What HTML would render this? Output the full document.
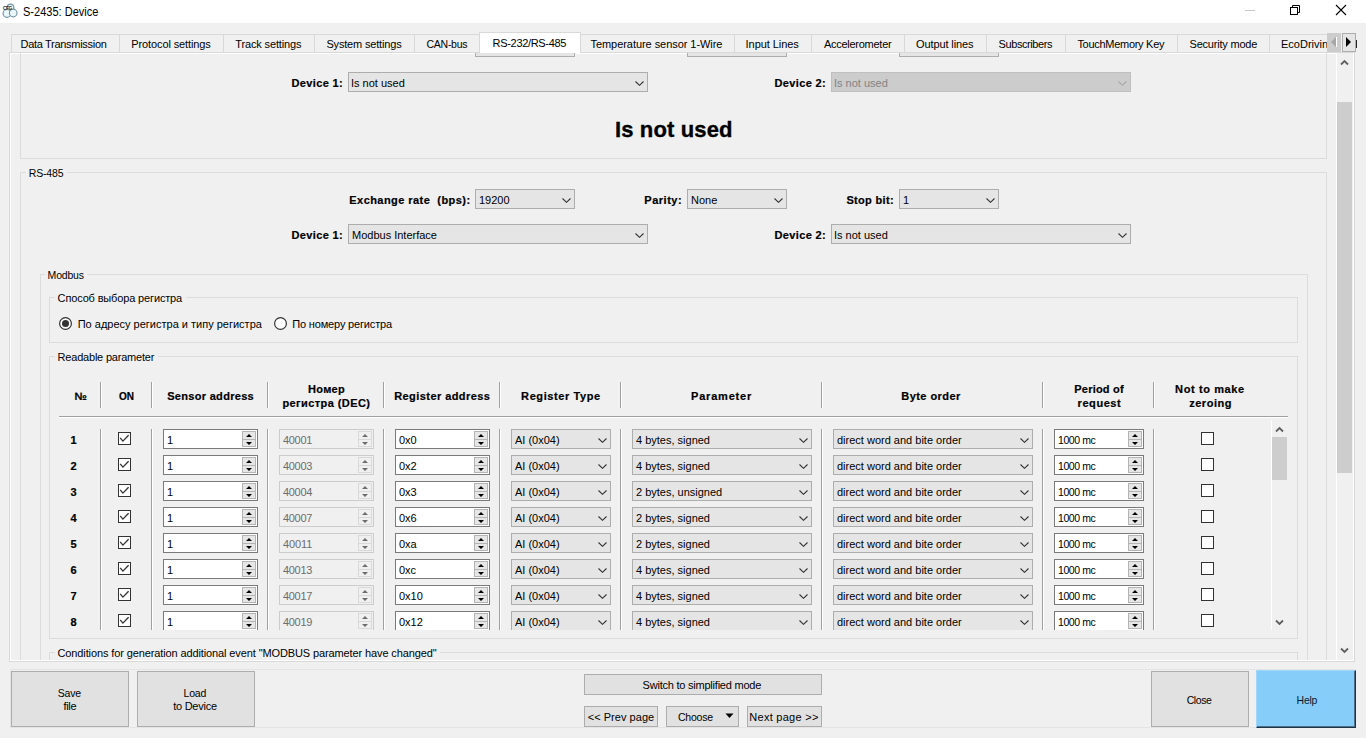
<!DOCTYPE html>
<html><head><meta charset="utf-8"><title>S-2435: Device</title>
<style>
html,body{margin:0;padding:0;}
body{width:1366px;height:738px;overflow:hidden;background:#f0f0f0;font-family:"Liberation Sans", sans-serif;position:relative;}
div,svg{position:absolute;}
</style></head><body>
<div style="left:0;top:0;width:1366px;height:23px;background:#fff;"></div>
<svg style="left:0;top:0" width="22" height="22" viewBox="0 0 22 22">
<circle cx="10.5" cy="7.5" r="3.3" fill="#eaf8fc" stroke="#7896a3" stroke-width="1.2"/>
<circle cx="7" cy="13.4" r="3.9" fill="#eaf8fc" stroke="#7896a3" stroke-width="1.2"/>
<circle cx="13.2" cy="13" r="3.8" fill="#eaf8fc" stroke="#7896a3" stroke-width="1.2"/>
<text x="2.9" y="9.8" font-size="4.6" font-family="Liberation Sans" fill="#222" font-weight="bold" letter-spacing="-0.3">CFG</text>
</svg>
<div style="left:23.30px;top:2px;font-size:12px;line-height:20px;color:#000;white-space:pre;transform:scaleX(0.9190);transform-origin:0 0;">S-2435: Device</div>
<div style="left:1245px;top:10px;width:10px;height:1px;background:#c8c8c8;"></div>
<svg style="left:1288px;top:3px" width="14" height="14" viewBox="0 0 14 14"><rect x="2.5" y="4.5" width="7" height="7" fill="none" stroke="#000" stroke-width="1"/><path d="M4.5 4.5 V2.5 H11.5 V9.5 H9.5" fill="none" stroke="#000" stroke-width="1"/></svg>
<svg style="left:1334px;top:3px" width="14" height="14" viewBox="0 0 14 14"><path d="M2 2 L12 12 M12 2 L2 12" stroke="#000" stroke-width="1.1"/></svg>
<div style="left:9px;top:52px;width:1346px;height:610px;box-sizing:border-box;border:1px solid #d9d9d9;"></div>
<div style="left:10px;top:53px;width:1344px;height:608px;box-sizing:border-box;border:1px solid #ffffff;"></div>
<div style="left:11px;top:53px;width:1326px;height:607px;overflow:hidden;">
<div style="left:-11px;top:-53px;width:1366px;height:738px;">
<div style="left:20px;top:0px;width:1307px;height:159px;box-sizing:border-box;border:1px solid #dcdcdc;"></div>
<div style="left:475px;top:31px;width:100px;height:26px;box-sizing:border-box;border:1px solid #adadad;background:#e5e5e5;"></div>
<div style="left:687px;top:31px;width:100px;height:26px;box-sizing:border-box;border:1px solid #adadad;background:#e5e5e5;"></div>
<div style="left:899px;top:31px;width:100px;height:26px;box-sizing:border-box;border:1px solid #adadad;background:#e5e5e5;"></div>
<div style="left:291.50px;top:73px;font-size:11px;line-height:20px;color:#000;white-space:pre;font-weight:bold;-webkit-text-stroke:0.2px #000;letter-spacing:0.357px;">Device 1:</div>
<div style="left:348px;top:72px;width:300px;height:20px;background:#e5e5e5;box-sizing:border-box;border:1px solid #adadad;"></div>
<div style="left:351.00px;top:73px;font-size:11px;line-height:20px;color:#000;white-space:pre;">Is not used</div>
<svg style="left:635px;top:81px" width="9" height="5" viewBox="0 0 9 5"><path d="M0.5 0.5 L4.5 4.3 L8.5 0.5" fill="none" stroke="#333" stroke-width="1.1"/></svg>
<div style="left:774.50px;top:73px;font-size:11px;line-height:20px;color:#000;white-space:pre;font-weight:bold;-webkit-text-stroke:0.2px #000;letter-spacing:0.357px;">Device 2:</div>
<div style="left:831px;top:72px;width:300px;height:20px;background:#cccccc;box-sizing:border-box;border:1px solid #bfbfbf;"></div>
<div style="left:834.00px;top:73px;font-size:11px;line-height:20px;color:#838383;white-space:pre;">Is not used</div>
<svg style="left:1118px;top:81px" width="9" height="5" viewBox="0 0 9 5"><path d="M0.5 0.5 L4.5 4.3 L8.5 0.5" fill="none" stroke="#a8a8a8" stroke-width="1.1"/></svg>
<div style="left:615.00px;top:120px;font-size:22px;line-height:20px;color:#000;white-space:pre;font-weight:bold;letter-spacing:0.132px;-webkit-text-stroke:0.35px #000;">Is not used</div>
<div style="left:20px;top:172px;width:1307px;height:600px;box-sizing:border-box;border:1px solid #dcdcdc;"></div>
<div style="left:26px;top:166px;width:41px;height:12px;background:#f0f0f0;"></div>
<div style="left:28.80px;top:163px;font-size:10.5px;line-height:20px;color:#000;white-space:pre;letter-spacing:-0.178px;">RS-485</div>
<div style="left:349.30px;top:190px;font-size:11px;line-height:20px;color:#000;white-space:pre;font-weight:bold;-webkit-text-stroke:0.2px #000;letter-spacing:0.445px;">Exchange rate  (bps):</div>
<div style="left:475px;top:189px;width:100px;height:20px;background:#e5e5e5;box-sizing:border-box;border:1px solid #adadad;"></div>
<div style="left:479.00px;top:190px;font-size:11px;line-height:20px;color:#000;white-space:pre;">19200</div>
<svg style="left:562px;top:198px" width="9" height="5" viewBox="0 0 9 5"><path d="M0.5 0.5 L4.5 4.3 L8.5 0.5" fill="none" stroke="#333" stroke-width="1.1"/></svg>
<div style="left:644.30px;top:190px;font-size:11px;line-height:20px;color:#000;white-space:pre;font-weight:bold;-webkit-text-stroke:0.2px #000;letter-spacing:0.521px;">Parity:</div>
<div style="left:687px;top:189px;width:100px;height:20px;background:#e5e5e5;box-sizing:border-box;border:1px solid #adadad;"></div>
<div style="left:691.00px;top:190px;font-size:11px;line-height:20px;color:#000;white-space:pre;">None</div>
<svg style="left:774px;top:198px" width="9" height="5" viewBox="0 0 9 5"><path d="M0.5 0.5 L4.5 4.3 L8.5 0.5" fill="none" stroke="#333" stroke-width="1.1"/></svg>
<div style="left:846.40px;top:190px;font-size:11px;line-height:20px;color:#000;white-space:pre;font-weight:bold;-webkit-text-stroke:0.2px #000;letter-spacing:0.333px;">Stop bit:</div>
<div style="left:899px;top:189px;width:100px;height:20px;background:#e5e5e5;box-sizing:border-box;border:1px solid #adadad;"></div>
<div style="left:903.00px;top:190px;font-size:11px;line-height:20px;color:#000;white-space:pre;">1</div>
<svg style="left:986px;top:198px" width="9" height="5" viewBox="0 0 9 5"><path d="M0.5 0.5 L4.5 4.3 L8.5 0.5" fill="none" stroke="#333" stroke-width="1.1"/></svg>
<div style="left:291.50px;top:225px;font-size:11px;line-height:20px;color:#000;white-space:pre;font-weight:bold;-webkit-text-stroke:0.2px #000;letter-spacing:0.357px;">Device 1:</div>
<div style="left:348px;top:224px;width:300px;height:20px;background:#e5e5e5;box-sizing:border-box;border:1px solid #adadad;"></div>
<div style="left:352.00px;top:225px;font-size:11px;line-height:20px;color:#000;white-space:pre;">Modbus Interface</div>
<svg style="left:635px;top:233px" width="9" height="5" viewBox="0 0 9 5"><path d="M0.5 0.5 L4.5 4.3 L8.5 0.5" fill="none" stroke="#333" stroke-width="1.1"/></svg>
<div style="left:774.50px;top:225px;font-size:11px;line-height:20px;color:#000;white-space:pre;font-weight:bold;-webkit-text-stroke:0.2px #000;letter-spacing:0.357px;">Device 2:</div>
<div style="left:831px;top:224px;width:300px;height:20px;background:#e5e5e5;box-sizing:border-box;border:1px solid #adadad;"></div>
<div style="left:834.00px;top:225px;font-size:11px;line-height:20px;color:#000;white-space:pre;">Is not used</div>
<svg style="left:1118px;top:233px" width="9" height="5" viewBox="0 0 9 5"><path d="M0.5 0.5 L4.5 4.3 L8.5 0.5" fill="none" stroke="#333" stroke-width="1.1"/></svg>
<div style="left:40px;top:274px;width:1268px;height:600px;box-sizing:border-box;border:1px solid #dcdcdc;"></div>
<div style="left:45px;top:268px;width:42px;height:12px;background:#f0f0f0;"></div>
<div style="left:47.60px;top:265px;font-size:10.5px;line-height:20px;color:#000;white-space:pre;letter-spacing:-0.206px;">Modbus</div>
<div style="left:49px;top:297px;width:1249px;height:46px;box-sizing:border-box;border:1px solid #dcdcdc;"></div>
<div style="left:55px;top:291px;width:131px;height:12px;background:#f0f0f0;"></div>
<div style="left:57.60px;top:288px;font-size:11px;line-height:20px;color:#000;white-space:pre;letter-spacing:-0.149px;">Способ выбора регистра</div>
<svg style="left:59px;top:317px" width="13" height="13" viewBox="0 0 13 13"><circle cx="6.5" cy="6.5" r="5.9" fill="#fff" stroke="#333" stroke-width="1.2"/><circle cx="6.5" cy="6.5" r="3.5" fill="#333"/></svg>
<div style="left:77.70px;top:314px;font-size:11px;line-height:20px;color:#000;white-space:pre;">По адресу регистра и типу регистра</div>
<svg style="left:274px;top:317px" width="13" height="13" viewBox="0 0 13 13"><circle cx="6.5" cy="6.5" r="5.9" fill="#fff" stroke="#333" stroke-width="1.2"/></svg>
<div style="left:292.30px;top:314px;font-size:11px;line-height:20px;color:#000;white-space:pre;letter-spacing:-0.168px;">По номеру регистра</div>
<div style="left:49px;top:356px;width:1249px;height:283px;box-sizing:border-box;border:1px solid #dcdcdc;"></div>
<div style="left:55px;top:350px;width:103px;height:12px;background:#f0f0f0;"></div>
<div style="left:57.60px;top:347px;font-size:11px;line-height:20px;color:#000;white-space:pre;letter-spacing:-0.207px;">Readable parameter</div>
<div style="left:100px;top:382px;width:1px;height:26px;background:#a0a0a0;"></div>
<div style="left:101px;top:382px;width:1px;height:26px;background:#ffffff;"></div>
<div style="left:151px;top:382px;width:1px;height:26px;background:#a0a0a0;"></div>
<div style="left:152px;top:382px;width:1px;height:26px;background:#ffffff;"></div>
<div style="left:267px;top:382px;width:1px;height:26px;background:#a0a0a0;"></div>
<div style="left:268px;top:382px;width:1px;height:26px;background:#ffffff;"></div>
<div style="left:383px;top:382px;width:1px;height:26px;background:#a0a0a0;"></div>
<div style="left:384px;top:382px;width:1px;height:26px;background:#ffffff;"></div>
<div style="left:499px;top:382px;width:1px;height:26px;background:#a0a0a0;"></div>
<div style="left:500px;top:382px;width:1px;height:26px;background:#ffffff;"></div>
<div style="left:620px;top:382px;width:1px;height:26px;background:#a0a0a0;"></div>
<div style="left:621px;top:382px;width:1px;height:26px;background:#ffffff;"></div>
<div style="left:821px;top:382px;width:1px;height:26px;background:#a0a0a0;"></div>
<div style="left:822px;top:382px;width:1px;height:26px;background:#ffffff;"></div>
<div style="left:1042px;top:382px;width:1px;height:26px;background:#a0a0a0;"></div>
<div style="left:1043px;top:382px;width:1px;height:26px;background:#ffffff;"></div>
<div style="left:1153px;top:382px;width:1px;height:26px;background:#a0a0a0;"></div>
<div style="left:1154px;top:382px;width:1px;height:26px;background:#ffffff;"></div>
<div style="left:59px;top:416px;width:1229px;height:1px;background:#a0a0a0;"></div>
<div style="left:59px;top:417px;width:1229px;height:1px;background:#ffffff;"></div>
<div style="left:74.40px;top:386px;font-size:11px;line-height:20px;color:#000;white-space:pre;font-weight:bold;-webkit-text-stroke:0.2px #000;">№</div>
<div style="left:119.00px;top:387px;font-size:10.0px;line-height:20px;color:#000;white-space:pre;font-weight:bold;-webkit-text-stroke:0.2px #000;letter-spacing:-0.051px;">ON</div>
<div style="left:167.20px;top:386px;font-size:11px;line-height:20px;color:#000;white-space:pre;font-weight:bold;-webkit-text-stroke:0.2px #000;letter-spacing:0.306px;">Sensor address</div>
<div style="left:308.00px;top:379px;font-size:11px;line-height:20px;color:#000;white-space:pre;font-weight:bold;-webkit-text-stroke:0.2px #000;letter-spacing:0.307px;">Номер</div>
<div style="left:282.40px;top:393px;font-size:11px;line-height:20px;color:#000;white-space:pre;font-weight:bold;-webkit-text-stroke:0.2px #000;letter-spacing:0.418px;">регистра (DEC)</div>
<div style="left:394.20px;top:386px;font-size:11px;line-height:20px;color:#000;white-space:pre;font-weight:bold;-webkit-text-stroke:0.2px #000;letter-spacing:0.430px;">Register address</div>
<div style="left:521.10px;top:386px;font-size:11px;line-height:20px;color:#000;white-space:pre;font-weight:bold;-webkit-text-stroke:0.2px #000;letter-spacing:0.591px;">Register Type</div>
<div style="left:691.00px;top:386px;font-size:11px;line-height:20px;color:#000;white-space:pre;font-weight:bold;-webkit-text-stroke:0.2px #000;letter-spacing:0.808px;">Parameter</div>
<div style="left:901.30px;top:386px;font-size:11px;line-height:20px;color:#000;white-space:pre;font-weight:bold;-webkit-text-stroke:0.2px #000;letter-spacing:0.441px;">Byte order</div>
<div style="left:1074.30px;top:379px;font-size:11px;line-height:20px;color:#000;white-space:pre;font-weight:bold;-webkit-text-stroke:0.2px #000;letter-spacing:0.212px;">Period of</div>
<div style="left:1077.60px;top:393px;font-size:11px;line-height:20px;color:#000;white-space:pre;font-weight:bold;-webkit-text-stroke:0.2px #000;letter-spacing:0.555px;">request</div>
<div style="left:1175.10px;top:379px;font-size:11px;line-height:20px;color:#000;white-space:pre;font-weight:bold;-webkit-text-stroke:0.2px #000;letter-spacing:0.606px;">Not to make</div>
<div style="left:1189.20px;top:393px;font-size:11px;line-height:20px;color:#000;white-space:pre;font-weight:bold;-webkit-text-stroke:0.2px #000;letter-spacing:0.518px;">zeroing</div>
<div style="left:59px;top:420px;width:1229px;height:210px;overflow:hidden;">
<div style="left:-59px;top:-420px;width:1366px;height:738px;">
<div style="left:100px;top:429px;width:1px;height:300px;background:#a0a0a0;"></div>
<div style="left:101px;top:429px;width:1px;height:300px;background:#ffffff;"></div>
<div style="left:151px;top:429px;width:1px;height:300px;background:#a0a0a0;"></div>
<div style="left:152px;top:429px;width:1px;height:300px;background:#ffffff;"></div>
<div style="left:267px;top:429px;width:1px;height:300px;background:#a0a0a0;"></div>
<div style="left:268px;top:429px;width:1px;height:300px;background:#ffffff;"></div>
<div style="left:383px;top:429px;width:1px;height:300px;background:#a0a0a0;"></div>
<div style="left:384px;top:429px;width:1px;height:300px;background:#ffffff;"></div>
<div style="left:499px;top:429px;width:1px;height:300px;background:#a0a0a0;"></div>
<div style="left:500px;top:429px;width:1px;height:300px;background:#ffffff;"></div>
<div style="left:620px;top:429px;width:1px;height:300px;background:#a0a0a0;"></div>
<div style="left:621px;top:429px;width:1px;height:300px;background:#ffffff;"></div>
<div style="left:821px;top:429px;width:1px;height:300px;background:#a0a0a0;"></div>
<div style="left:822px;top:429px;width:1px;height:300px;background:#ffffff;"></div>
<div style="left:1042px;top:429px;width:1px;height:300px;background:#a0a0a0;"></div>
<div style="left:1043px;top:429px;width:1px;height:300px;background:#ffffff;"></div>
<div style="left:1153px;top:429px;width:1px;height:300px;background:#a0a0a0;"></div>
<div style="left:1154px;top:429px;width:1px;height:300px;background:#ffffff;"></div>
<div style="left:70.50px;top:430px;font-size:11px;line-height:20px;color:#000;white-space:pre;font-weight:bold;-webkit-text-stroke:0.2px #000;">1</div>
<div style="left:118px;top:432px;width:13px;height:13px;background:#fff;box-sizing:border-box;border:1px solid #333;"></div>
<svg style="left:118px;top:432px" width="13" height="13" viewBox="0 0 13 13"><path d="M2.2 5.9 L4.9 9.1 L10.6 3.2" fill="none" stroke="#333" stroke-width="1.35"/></svg>
<div style="left:163px;top:429px;width:95px;height:20px;background:#fff;box-sizing:border-box;border:1px solid #7a7a7a;"></div>
<div style="left:242px;top:431px;width:14px;height:16px;background:#e6e6e6;box-sizing:border-box;border:1px solid #b4b4b4;"></div>
<div style="left:243px;top:439px;width:12px;height:1px;background:#b4b4b4;"></div>
<svg style="left:246px;top:434px" width="6" height="12" viewBox="0 0 6 12"><path d="M0 3 L3 0 L6 3Z M0 8 L3 11 L6 8Z" fill="#000"/></svg>
<div style="left:167.00px;top:430px;font-size:11px;line-height:20px;color:#000;white-space:pre;">1</div>
<div style="left:279px;top:429px;width:95px;height:20px;background:#f0f0f0;box-sizing:border-box;border:1px solid #cccccc;"></div>
<div style="left:358px;top:431px;width:14px;height:16px;background:#f0f0f0;box-sizing:border-box;border:1px solid #d9d9d9;"></div>
<div style="left:359px;top:439px;width:12px;height:1px;background:#d9d9d9;"></div>
<svg style="left:362px;top:434px" width="6" height="12" viewBox="0 0 6 12"><path d="M0 3 L3 0 L6 3Z M0 8 L3 11 L6 8Z" fill="#6d6d6d"/></svg>
<div style="left:283.00px;top:430px;font-size:11px;line-height:20px;color:#6d6d6d;white-space:pre;letter-spacing:-0.318px;">40001</div>
<div style="left:395px;top:429px;width:95px;height:20px;background:#fff;box-sizing:border-box;border:1px solid #7a7a7a;"></div>
<div style="left:474px;top:431px;width:14px;height:16px;background:#e6e6e6;box-sizing:border-box;border:1px solid #b4b4b4;"></div>
<div style="left:475px;top:439px;width:12px;height:1px;background:#b4b4b4;"></div>
<svg style="left:478px;top:434px" width="6" height="12" viewBox="0 0 6 12"><path d="M0 3 L3 0 L6 3Z M0 8 L3 11 L6 8Z" fill="#000"/></svg>
<div style="left:399.00px;top:430px;font-size:11px;line-height:20px;color:#000;white-space:pre;">0x0</div>
<div style="left:511px;top:429px;width:100px;height:20px;background:#e5e5e5;box-sizing:border-box;border:1px solid #adadad;"></div>
<div style="left:515.00px;top:430px;font-size:11px;line-height:20px;color:#000;white-space:pre;">AI (0x04)</div>
<svg style="left:598px;top:438px" width="9" height="5" viewBox="0 0 9 5"><path d="M0.5 0.5 L4.5 4.3 L8.5 0.5" fill="none" stroke="#333" stroke-width="1.1"/></svg>
<div style="left:632px;top:429px;width:180px;height:20px;background:#e5e5e5;box-sizing:border-box;border:1px solid #adadad;"></div>
<div style="left:636.00px;top:430px;font-size:11px;line-height:20px;color:#000;white-space:pre;">4 bytes, signed</div>
<svg style="left:799px;top:438px" width="9" height="5" viewBox="0 0 9 5"><path d="M0.5 0.5 L4.5 4.3 L8.5 0.5" fill="none" stroke="#333" stroke-width="1.1"/></svg>
<div style="left:833px;top:429px;width:200px;height:20px;background:#e5e5e5;box-sizing:border-box;border:1px solid #adadad;"></div>
<div style="left:837.00px;top:430px;font-size:11px;line-height:20px;color:#000;white-space:pre;">direct word and bite order</div>
<svg style="left:1020px;top:438px" width="9" height="5" viewBox="0 0 9 5"><path d="M0.5 0.5 L4.5 4.3 L8.5 0.5" fill="none" stroke="#333" stroke-width="1.1"/></svg>
<div style="left:1054px;top:429px;width:90px;height:20px;background:#fff;box-sizing:border-box;border:1px solid #7a7a7a;"></div>
<div style="left:1128px;top:431px;width:14px;height:16px;background:#e6e6e6;box-sizing:border-box;border:1px solid #b4b4b4;"></div>
<div style="left:1129px;top:439px;width:12px;height:1px;background:#b4b4b4;"></div>
<svg style="left:1132px;top:434px" width="6" height="12" viewBox="0 0 6 12"><path d="M0 3 L3 0 L6 3Z M0 8 L3 11 L6 8Z" fill="#000"/></svg>
<div style="left:1058.00px;top:430px;font-size:10.5px;line-height:20px;color:#000;white-space:pre;letter-spacing:-0.408px;">1000 mc</div>
<div style="left:1201px;top:432px;width:13px;height:13px;background:#fff;box-sizing:border-box;border:1px solid #333;"></div>
<div style="left:70.50px;top:456px;font-size:11px;line-height:20px;color:#000;white-space:pre;font-weight:bold;-webkit-text-stroke:0.2px #000;">2</div>
<div style="left:118px;top:458px;width:13px;height:13px;background:#fff;box-sizing:border-box;border:1px solid #333;"></div>
<svg style="left:118px;top:458px" width="13" height="13" viewBox="0 0 13 13"><path d="M2.2 5.9 L4.9 9.1 L10.6 3.2" fill="none" stroke="#333" stroke-width="1.35"/></svg>
<div style="left:163px;top:455px;width:95px;height:20px;background:#fff;box-sizing:border-box;border:1px solid #7a7a7a;"></div>
<div style="left:242px;top:457px;width:14px;height:16px;background:#e6e6e6;box-sizing:border-box;border:1px solid #b4b4b4;"></div>
<div style="left:243px;top:465px;width:12px;height:1px;background:#b4b4b4;"></div>
<svg style="left:246px;top:460px" width="6" height="12" viewBox="0 0 6 12"><path d="M0 3 L3 0 L6 3Z M0 8 L3 11 L6 8Z" fill="#000"/></svg>
<div style="left:167.00px;top:456px;font-size:11px;line-height:20px;color:#000;white-space:pre;">1</div>
<div style="left:279px;top:455px;width:95px;height:20px;background:#f0f0f0;box-sizing:border-box;border:1px solid #cccccc;"></div>
<div style="left:358px;top:457px;width:14px;height:16px;background:#f0f0f0;box-sizing:border-box;border:1px solid #d9d9d9;"></div>
<div style="left:359px;top:465px;width:12px;height:1px;background:#d9d9d9;"></div>
<svg style="left:362px;top:460px" width="6" height="12" viewBox="0 0 6 12"><path d="M0 3 L3 0 L6 3Z M0 8 L3 11 L6 8Z" fill="#6d6d6d"/></svg>
<div style="left:283.00px;top:456px;font-size:11px;line-height:20px;color:#6d6d6d;white-space:pre;letter-spacing:-0.318px;">40003</div>
<div style="left:395px;top:455px;width:95px;height:20px;background:#fff;box-sizing:border-box;border:1px solid #7a7a7a;"></div>
<div style="left:474px;top:457px;width:14px;height:16px;background:#e6e6e6;box-sizing:border-box;border:1px solid #b4b4b4;"></div>
<div style="left:475px;top:465px;width:12px;height:1px;background:#b4b4b4;"></div>
<svg style="left:478px;top:460px" width="6" height="12" viewBox="0 0 6 12"><path d="M0 3 L3 0 L6 3Z M0 8 L3 11 L6 8Z" fill="#000"/></svg>
<div style="left:399.00px;top:456px;font-size:11px;line-height:20px;color:#000;white-space:pre;">0x2</div>
<div style="left:511px;top:455px;width:100px;height:20px;background:#e5e5e5;box-sizing:border-box;border:1px solid #adadad;"></div>
<div style="left:515.00px;top:456px;font-size:11px;line-height:20px;color:#000;white-space:pre;">AI (0x04)</div>
<svg style="left:598px;top:464px" width="9" height="5" viewBox="0 0 9 5"><path d="M0.5 0.5 L4.5 4.3 L8.5 0.5" fill="none" stroke="#333" stroke-width="1.1"/></svg>
<div style="left:632px;top:455px;width:180px;height:20px;background:#e5e5e5;box-sizing:border-box;border:1px solid #adadad;"></div>
<div style="left:636.00px;top:456px;font-size:11px;line-height:20px;color:#000;white-space:pre;">4 bytes, signed</div>
<svg style="left:799px;top:464px" width="9" height="5" viewBox="0 0 9 5"><path d="M0.5 0.5 L4.5 4.3 L8.5 0.5" fill="none" stroke="#333" stroke-width="1.1"/></svg>
<div style="left:833px;top:455px;width:200px;height:20px;background:#e5e5e5;box-sizing:border-box;border:1px solid #adadad;"></div>
<div style="left:837.00px;top:456px;font-size:11px;line-height:20px;color:#000;white-space:pre;">direct word and bite order</div>
<svg style="left:1020px;top:464px" width="9" height="5" viewBox="0 0 9 5"><path d="M0.5 0.5 L4.5 4.3 L8.5 0.5" fill="none" stroke="#333" stroke-width="1.1"/></svg>
<div style="left:1054px;top:455px;width:90px;height:20px;background:#fff;box-sizing:border-box;border:1px solid #7a7a7a;"></div>
<div style="left:1128px;top:457px;width:14px;height:16px;background:#e6e6e6;box-sizing:border-box;border:1px solid #b4b4b4;"></div>
<div style="left:1129px;top:465px;width:12px;height:1px;background:#b4b4b4;"></div>
<svg style="left:1132px;top:460px" width="6" height="12" viewBox="0 0 6 12"><path d="M0 3 L3 0 L6 3Z M0 8 L3 11 L6 8Z" fill="#000"/></svg>
<div style="left:1058.00px;top:456px;font-size:10.5px;line-height:20px;color:#000;white-space:pre;letter-spacing:-0.408px;">1000 mc</div>
<div style="left:1201px;top:458px;width:13px;height:13px;background:#fff;box-sizing:border-box;border:1px solid #333;"></div>
<div style="left:70.50px;top:482px;font-size:11px;line-height:20px;color:#000;white-space:pre;font-weight:bold;-webkit-text-stroke:0.2px #000;">3</div>
<div style="left:118px;top:484px;width:13px;height:13px;background:#fff;box-sizing:border-box;border:1px solid #333;"></div>
<svg style="left:118px;top:484px" width="13" height="13" viewBox="0 0 13 13"><path d="M2.2 5.9 L4.9 9.1 L10.6 3.2" fill="none" stroke="#333" stroke-width="1.35"/></svg>
<div style="left:163px;top:481px;width:95px;height:20px;background:#fff;box-sizing:border-box;border:1px solid #7a7a7a;"></div>
<div style="left:242px;top:483px;width:14px;height:16px;background:#e6e6e6;box-sizing:border-box;border:1px solid #b4b4b4;"></div>
<div style="left:243px;top:491px;width:12px;height:1px;background:#b4b4b4;"></div>
<svg style="left:246px;top:486px" width="6" height="12" viewBox="0 0 6 12"><path d="M0 3 L3 0 L6 3Z M0 8 L3 11 L6 8Z" fill="#000"/></svg>
<div style="left:167.00px;top:482px;font-size:11px;line-height:20px;color:#000;white-space:pre;">1</div>
<div style="left:279px;top:481px;width:95px;height:20px;background:#f0f0f0;box-sizing:border-box;border:1px solid #cccccc;"></div>
<div style="left:358px;top:483px;width:14px;height:16px;background:#f0f0f0;box-sizing:border-box;border:1px solid #d9d9d9;"></div>
<div style="left:359px;top:491px;width:12px;height:1px;background:#d9d9d9;"></div>
<svg style="left:362px;top:486px" width="6" height="12" viewBox="0 0 6 12"><path d="M0 3 L3 0 L6 3Z M0 8 L3 11 L6 8Z" fill="#6d6d6d"/></svg>
<div style="left:283.00px;top:482px;font-size:11px;line-height:20px;color:#6d6d6d;white-space:pre;letter-spacing:-0.318px;">40004</div>
<div style="left:395px;top:481px;width:95px;height:20px;background:#fff;box-sizing:border-box;border:1px solid #7a7a7a;"></div>
<div style="left:474px;top:483px;width:14px;height:16px;background:#e6e6e6;box-sizing:border-box;border:1px solid #b4b4b4;"></div>
<div style="left:475px;top:491px;width:12px;height:1px;background:#b4b4b4;"></div>
<svg style="left:478px;top:486px" width="6" height="12" viewBox="0 0 6 12"><path d="M0 3 L3 0 L6 3Z M0 8 L3 11 L6 8Z" fill="#000"/></svg>
<div style="left:399.00px;top:482px;font-size:11px;line-height:20px;color:#000;white-space:pre;">0x3</div>
<div style="left:511px;top:481px;width:100px;height:20px;background:#e5e5e5;box-sizing:border-box;border:1px solid #adadad;"></div>
<div style="left:515.00px;top:482px;font-size:11px;line-height:20px;color:#000;white-space:pre;">AI (0x04)</div>
<svg style="left:598px;top:490px" width="9" height="5" viewBox="0 0 9 5"><path d="M0.5 0.5 L4.5 4.3 L8.5 0.5" fill="none" stroke="#333" stroke-width="1.1"/></svg>
<div style="left:632px;top:481px;width:180px;height:20px;background:#e5e5e5;box-sizing:border-box;border:1px solid #adadad;"></div>
<div style="left:636.00px;top:482px;font-size:11px;line-height:20px;color:#000;white-space:pre;">2 bytes, unsigned</div>
<svg style="left:799px;top:490px" width="9" height="5" viewBox="0 0 9 5"><path d="M0.5 0.5 L4.5 4.3 L8.5 0.5" fill="none" stroke="#333" stroke-width="1.1"/></svg>
<div style="left:833px;top:481px;width:200px;height:20px;background:#e5e5e5;box-sizing:border-box;border:1px solid #adadad;"></div>
<div style="left:837.00px;top:482px;font-size:11px;line-height:20px;color:#000;white-space:pre;">direct word and bite order</div>
<svg style="left:1020px;top:490px" width="9" height="5" viewBox="0 0 9 5"><path d="M0.5 0.5 L4.5 4.3 L8.5 0.5" fill="none" stroke="#333" stroke-width="1.1"/></svg>
<div style="left:1054px;top:481px;width:90px;height:20px;background:#fff;box-sizing:border-box;border:1px solid #7a7a7a;"></div>
<div style="left:1128px;top:483px;width:14px;height:16px;background:#e6e6e6;box-sizing:border-box;border:1px solid #b4b4b4;"></div>
<div style="left:1129px;top:491px;width:12px;height:1px;background:#b4b4b4;"></div>
<svg style="left:1132px;top:486px" width="6" height="12" viewBox="0 0 6 12"><path d="M0 3 L3 0 L6 3Z M0 8 L3 11 L6 8Z" fill="#000"/></svg>
<div style="left:1058.00px;top:482px;font-size:10.5px;line-height:20px;color:#000;white-space:pre;letter-spacing:-0.408px;">1000 mc</div>
<div style="left:1201px;top:484px;width:13px;height:13px;background:#fff;box-sizing:border-box;border:1px solid #333;"></div>
<div style="left:70.50px;top:508px;font-size:11px;line-height:20px;color:#000;white-space:pre;font-weight:bold;-webkit-text-stroke:0.2px #000;">4</div>
<div style="left:118px;top:510px;width:13px;height:13px;background:#fff;box-sizing:border-box;border:1px solid #333;"></div>
<svg style="left:118px;top:510px" width="13" height="13" viewBox="0 0 13 13"><path d="M2.2 5.9 L4.9 9.1 L10.6 3.2" fill="none" stroke="#333" stroke-width="1.35"/></svg>
<div style="left:163px;top:507px;width:95px;height:20px;background:#fff;box-sizing:border-box;border:1px solid #7a7a7a;"></div>
<div style="left:242px;top:509px;width:14px;height:16px;background:#e6e6e6;box-sizing:border-box;border:1px solid #b4b4b4;"></div>
<div style="left:243px;top:517px;width:12px;height:1px;background:#b4b4b4;"></div>
<svg style="left:246px;top:512px" width="6" height="12" viewBox="0 0 6 12"><path d="M0 3 L3 0 L6 3Z M0 8 L3 11 L6 8Z" fill="#000"/></svg>
<div style="left:167.00px;top:508px;font-size:11px;line-height:20px;color:#000;white-space:pre;">1</div>
<div style="left:279px;top:507px;width:95px;height:20px;background:#f0f0f0;box-sizing:border-box;border:1px solid #cccccc;"></div>
<div style="left:358px;top:509px;width:14px;height:16px;background:#f0f0f0;box-sizing:border-box;border:1px solid #d9d9d9;"></div>
<div style="left:359px;top:517px;width:12px;height:1px;background:#d9d9d9;"></div>
<svg style="left:362px;top:512px" width="6" height="12" viewBox="0 0 6 12"><path d="M0 3 L3 0 L6 3Z M0 8 L3 11 L6 8Z" fill="#6d6d6d"/></svg>
<div style="left:283.00px;top:508px;font-size:11px;line-height:20px;color:#6d6d6d;white-space:pre;letter-spacing:-0.318px;">40007</div>
<div style="left:395px;top:507px;width:95px;height:20px;background:#fff;box-sizing:border-box;border:1px solid #7a7a7a;"></div>
<div style="left:474px;top:509px;width:14px;height:16px;background:#e6e6e6;box-sizing:border-box;border:1px solid #b4b4b4;"></div>
<div style="left:475px;top:517px;width:12px;height:1px;background:#b4b4b4;"></div>
<svg style="left:478px;top:512px" width="6" height="12" viewBox="0 0 6 12"><path d="M0 3 L3 0 L6 3Z M0 8 L3 11 L6 8Z" fill="#000"/></svg>
<div style="left:399.00px;top:508px;font-size:11px;line-height:20px;color:#000;white-space:pre;">0x6</div>
<div style="left:511px;top:507px;width:100px;height:20px;background:#e5e5e5;box-sizing:border-box;border:1px solid #adadad;"></div>
<div style="left:515.00px;top:508px;font-size:11px;line-height:20px;color:#000;white-space:pre;">AI (0x04)</div>
<svg style="left:598px;top:516px" width="9" height="5" viewBox="0 0 9 5"><path d="M0.5 0.5 L4.5 4.3 L8.5 0.5" fill="none" stroke="#333" stroke-width="1.1"/></svg>
<div style="left:632px;top:507px;width:180px;height:20px;background:#e5e5e5;box-sizing:border-box;border:1px solid #adadad;"></div>
<div style="left:636.00px;top:508px;font-size:11px;line-height:20px;color:#000;white-space:pre;">2 bytes, signed</div>
<svg style="left:799px;top:516px" width="9" height="5" viewBox="0 0 9 5"><path d="M0.5 0.5 L4.5 4.3 L8.5 0.5" fill="none" stroke="#333" stroke-width="1.1"/></svg>
<div style="left:833px;top:507px;width:200px;height:20px;background:#e5e5e5;box-sizing:border-box;border:1px solid #adadad;"></div>
<div style="left:837.00px;top:508px;font-size:11px;line-height:20px;color:#000;white-space:pre;">direct word and bite order</div>
<svg style="left:1020px;top:516px" width="9" height="5" viewBox="0 0 9 5"><path d="M0.5 0.5 L4.5 4.3 L8.5 0.5" fill="none" stroke="#333" stroke-width="1.1"/></svg>
<div style="left:1054px;top:507px;width:90px;height:20px;background:#fff;box-sizing:border-box;border:1px solid #7a7a7a;"></div>
<div style="left:1128px;top:509px;width:14px;height:16px;background:#e6e6e6;box-sizing:border-box;border:1px solid #b4b4b4;"></div>
<div style="left:1129px;top:517px;width:12px;height:1px;background:#b4b4b4;"></div>
<svg style="left:1132px;top:512px" width="6" height="12" viewBox="0 0 6 12"><path d="M0 3 L3 0 L6 3Z M0 8 L3 11 L6 8Z" fill="#000"/></svg>
<div style="left:1058.00px;top:508px;font-size:10.5px;line-height:20px;color:#000;white-space:pre;letter-spacing:-0.408px;">1000 mc</div>
<div style="left:1201px;top:510px;width:13px;height:13px;background:#fff;box-sizing:border-box;border:1px solid #333;"></div>
<div style="left:70.50px;top:534px;font-size:11px;line-height:20px;color:#000;white-space:pre;font-weight:bold;-webkit-text-stroke:0.2px #000;">5</div>
<div style="left:118px;top:536px;width:13px;height:13px;background:#fff;box-sizing:border-box;border:1px solid #333;"></div>
<svg style="left:118px;top:536px" width="13" height="13" viewBox="0 0 13 13"><path d="M2.2 5.9 L4.9 9.1 L10.6 3.2" fill="none" stroke="#333" stroke-width="1.35"/></svg>
<div style="left:163px;top:533px;width:95px;height:20px;background:#fff;box-sizing:border-box;border:1px solid #7a7a7a;"></div>
<div style="left:242px;top:535px;width:14px;height:16px;background:#e6e6e6;box-sizing:border-box;border:1px solid #b4b4b4;"></div>
<div style="left:243px;top:543px;width:12px;height:1px;background:#b4b4b4;"></div>
<svg style="left:246px;top:538px" width="6" height="12" viewBox="0 0 6 12"><path d="M0 3 L3 0 L6 3Z M0 8 L3 11 L6 8Z" fill="#000"/></svg>
<div style="left:167.00px;top:534px;font-size:11px;line-height:20px;color:#000;white-space:pre;">1</div>
<div style="left:279px;top:533px;width:95px;height:20px;background:#f0f0f0;box-sizing:border-box;border:1px solid #cccccc;"></div>
<div style="left:358px;top:535px;width:14px;height:16px;background:#f0f0f0;box-sizing:border-box;border:1px solid #d9d9d9;"></div>
<div style="left:359px;top:543px;width:12px;height:1px;background:#d9d9d9;"></div>
<svg style="left:362px;top:538px" width="6" height="12" viewBox="0 0 6 12"><path d="M0 3 L3 0 L6 3Z M0 8 L3 11 L6 8Z" fill="#6d6d6d"/></svg>
<div style="left:283.00px;top:534px;font-size:11px;line-height:20px;color:#6d6d6d;white-space:pre;letter-spacing:-0.114px;">40011</div>
<div style="left:395px;top:533px;width:95px;height:20px;background:#fff;box-sizing:border-box;border:1px solid #7a7a7a;"></div>
<div style="left:474px;top:535px;width:14px;height:16px;background:#e6e6e6;box-sizing:border-box;border:1px solid #b4b4b4;"></div>
<div style="left:475px;top:543px;width:12px;height:1px;background:#b4b4b4;"></div>
<svg style="left:478px;top:538px" width="6" height="12" viewBox="0 0 6 12"><path d="M0 3 L3 0 L6 3Z M0 8 L3 11 L6 8Z" fill="#000"/></svg>
<div style="left:399.00px;top:534px;font-size:11px;line-height:20px;color:#000;white-space:pre;">0xa</div>
<div style="left:511px;top:533px;width:100px;height:20px;background:#e5e5e5;box-sizing:border-box;border:1px solid #adadad;"></div>
<div style="left:515.00px;top:534px;font-size:11px;line-height:20px;color:#000;white-space:pre;">AI (0x04)</div>
<svg style="left:598px;top:542px" width="9" height="5" viewBox="0 0 9 5"><path d="M0.5 0.5 L4.5 4.3 L8.5 0.5" fill="none" stroke="#333" stroke-width="1.1"/></svg>
<div style="left:632px;top:533px;width:180px;height:20px;background:#e5e5e5;box-sizing:border-box;border:1px solid #adadad;"></div>
<div style="left:636.00px;top:534px;font-size:11px;line-height:20px;color:#000;white-space:pre;">2 bytes, signed</div>
<svg style="left:799px;top:542px" width="9" height="5" viewBox="0 0 9 5"><path d="M0.5 0.5 L4.5 4.3 L8.5 0.5" fill="none" stroke="#333" stroke-width="1.1"/></svg>
<div style="left:833px;top:533px;width:200px;height:20px;background:#e5e5e5;box-sizing:border-box;border:1px solid #adadad;"></div>
<div style="left:837.00px;top:534px;font-size:11px;line-height:20px;color:#000;white-space:pre;">direct word and bite order</div>
<svg style="left:1020px;top:542px" width="9" height="5" viewBox="0 0 9 5"><path d="M0.5 0.5 L4.5 4.3 L8.5 0.5" fill="none" stroke="#333" stroke-width="1.1"/></svg>
<div style="left:1054px;top:533px;width:90px;height:20px;background:#fff;box-sizing:border-box;border:1px solid #7a7a7a;"></div>
<div style="left:1128px;top:535px;width:14px;height:16px;background:#e6e6e6;box-sizing:border-box;border:1px solid #b4b4b4;"></div>
<div style="left:1129px;top:543px;width:12px;height:1px;background:#b4b4b4;"></div>
<svg style="left:1132px;top:538px" width="6" height="12" viewBox="0 0 6 12"><path d="M0 3 L3 0 L6 3Z M0 8 L3 11 L6 8Z" fill="#000"/></svg>
<div style="left:1058.00px;top:534px;font-size:10.5px;line-height:20px;color:#000;white-space:pre;letter-spacing:-0.408px;">1000 mc</div>
<div style="left:1201px;top:536px;width:13px;height:13px;background:#fff;box-sizing:border-box;border:1px solid #333;"></div>
<div style="left:70.50px;top:560px;font-size:11px;line-height:20px;color:#000;white-space:pre;font-weight:bold;-webkit-text-stroke:0.2px #000;">6</div>
<div style="left:118px;top:562px;width:13px;height:13px;background:#fff;box-sizing:border-box;border:1px solid #333;"></div>
<svg style="left:118px;top:562px" width="13" height="13" viewBox="0 0 13 13"><path d="M2.2 5.9 L4.9 9.1 L10.6 3.2" fill="none" stroke="#333" stroke-width="1.35"/></svg>
<div style="left:163px;top:559px;width:95px;height:20px;background:#fff;box-sizing:border-box;border:1px solid #7a7a7a;"></div>
<div style="left:242px;top:561px;width:14px;height:16px;background:#e6e6e6;box-sizing:border-box;border:1px solid #b4b4b4;"></div>
<div style="left:243px;top:569px;width:12px;height:1px;background:#b4b4b4;"></div>
<svg style="left:246px;top:564px" width="6" height="12" viewBox="0 0 6 12"><path d="M0 3 L3 0 L6 3Z M0 8 L3 11 L6 8Z" fill="#000"/></svg>
<div style="left:167.00px;top:560px;font-size:11px;line-height:20px;color:#000;white-space:pre;">1</div>
<div style="left:279px;top:559px;width:95px;height:20px;background:#f0f0f0;box-sizing:border-box;border:1px solid #cccccc;"></div>
<div style="left:358px;top:561px;width:14px;height:16px;background:#f0f0f0;box-sizing:border-box;border:1px solid #d9d9d9;"></div>
<div style="left:359px;top:569px;width:12px;height:1px;background:#d9d9d9;"></div>
<svg style="left:362px;top:564px" width="6" height="12" viewBox="0 0 6 12"><path d="M0 3 L3 0 L6 3Z M0 8 L3 11 L6 8Z" fill="#6d6d6d"/></svg>
<div style="left:283.00px;top:560px;font-size:11px;line-height:20px;color:#6d6d6d;white-space:pre;letter-spacing:-0.318px;">40013</div>
<div style="left:395px;top:559px;width:95px;height:20px;background:#fff;box-sizing:border-box;border:1px solid #7a7a7a;"></div>
<div style="left:474px;top:561px;width:14px;height:16px;background:#e6e6e6;box-sizing:border-box;border:1px solid #b4b4b4;"></div>
<div style="left:475px;top:569px;width:12px;height:1px;background:#b4b4b4;"></div>
<svg style="left:478px;top:564px" width="6" height="12" viewBox="0 0 6 12"><path d="M0 3 L3 0 L6 3Z M0 8 L3 11 L6 8Z" fill="#000"/></svg>
<div style="left:399.00px;top:560px;font-size:11px;line-height:20px;color:#000;white-space:pre;">0xc</div>
<div style="left:511px;top:559px;width:100px;height:20px;background:#e5e5e5;box-sizing:border-box;border:1px solid #adadad;"></div>
<div style="left:515.00px;top:560px;font-size:11px;line-height:20px;color:#000;white-space:pre;">AI (0x04)</div>
<svg style="left:598px;top:568px" width="9" height="5" viewBox="0 0 9 5"><path d="M0.5 0.5 L4.5 4.3 L8.5 0.5" fill="none" stroke="#333" stroke-width="1.1"/></svg>
<div style="left:632px;top:559px;width:180px;height:20px;background:#e5e5e5;box-sizing:border-box;border:1px solid #adadad;"></div>
<div style="left:636.00px;top:560px;font-size:11px;line-height:20px;color:#000;white-space:pre;">4 bytes, signed</div>
<svg style="left:799px;top:568px" width="9" height="5" viewBox="0 0 9 5"><path d="M0.5 0.5 L4.5 4.3 L8.5 0.5" fill="none" stroke="#333" stroke-width="1.1"/></svg>
<div style="left:833px;top:559px;width:200px;height:20px;background:#e5e5e5;box-sizing:border-box;border:1px solid #adadad;"></div>
<div style="left:837.00px;top:560px;font-size:11px;line-height:20px;color:#000;white-space:pre;">direct word and bite order</div>
<svg style="left:1020px;top:568px" width="9" height="5" viewBox="0 0 9 5"><path d="M0.5 0.5 L4.5 4.3 L8.5 0.5" fill="none" stroke="#333" stroke-width="1.1"/></svg>
<div style="left:1054px;top:559px;width:90px;height:20px;background:#fff;box-sizing:border-box;border:1px solid #7a7a7a;"></div>
<div style="left:1128px;top:561px;width:14px;height:16px;background:#e6e6e6;box-sizing:border-box;border:1px solid #b4b4b4;"></div>
<div style="left:1129px;top:569px;width:12px;height:1px;background:#b4b4b4;"></div>
<svg style="left:1132px;top:564px" width="6" height="12" viewBox="0 0 6 12"><path d="M0 3 L3 0 L6 3Z M0 8 L3 11 L6 8Z" fill="#000"/></svg>
<div style="left:1058.00px;top:560px;font-size:10.5px;line-height:20px;color:#000;white-space:pre;letter-spacing:-0.408px;">1000 mc</div>
<div style="left:1201px;top:562px;width:13px;height:13px;background:#fff;box-sizing:border-box;border:1px solid #333;"></div>
<div style="left:70.50px;top:586px;font-size:11px;line-height:20px;color:#000;white-space:pre;font-weight:bold;-webkit-text-stroke:0.2px #000;">7</div>
<div style="left:118px;top:588px;width:13px;height:13px;background:#fff;box-sizing:border-box;border:1px solid #333;"></div>
<svg style="left:118px;top:588px" width="13" height="13" viewBox="0 0 13 13"><path d="M2.2 5.9 L4.9 9.1 L10.6 3.2" fill="none" stroke="#333" stroke-width="1.35"/></svg>
<div style="left:163px;top:585px;width:95px;height:20px;background:#fff;box-sizing:border-box;border:1px solid #7a7a7a;"></div>
<div style="left:242px;top:587px;width:14px;height:16px;background:#e6e6e6;box-sizing:border-box;border:1px solid #b4b4b4;"></div>
<div style="left:243px;top:595px;width:12px;height:1px;background:#b4b4b4;"></div>
<svg style="left:246px;top:590px" width="6" height="12" viewBox="0 0 6 12"><path d="M0 3 L3 0 L6 3Z M0 8 L3 11 L6 8Z" fill="#000"/></svg>
<div style="left:167.00px;top:586px;font-size:11px;line-height:20px;color:#000;white-space:pre;">1</div>
<div style="left:279px;top:585px;width:95px;height:20px;background:#f0f0f0;box-sizing:border-box;border:1px solid #cccccc;"></div>
<div style="left:358px;top:587px;width:14px;height:16px;background:#f0f0f0;box-sizing:border-box;border:1px solid #d9d9d9;"></div>
<div style="left:359px;top:595px;width:12px;height:1px;background:#d9d9d9;"></div>
<svg style="left:362px;top:590px" width="6" height="12" viewBox="0 0 6 12"><path d="M0 3 L3 0 L6 3Z M0 8 L3 11 L6 8Z" fill="#6d6d6d"/></svg>
<div style="left:283.00px;top:586px;font-size:11px;line-height:20px;color:#6d6d6d;white-space:pre;letter-spacing:-0.318px;">40017</div>
<div style="left:395px;top:585px;width:95px;height:20px;background:#fff;box-sizing:border-box;border:1px solid #7a7a7a;"></div>
<div style="left:474px;top:587px;width:14px;height:16px;background:#e6e6e6;box-sizing:border-box;border:1px solid #b4b4b4;"></div>
<div style="left:475px;top:595px;width:12px;height:1px;background:#b4b4b4;"></div>
<svg style="left:478px;top:590px" width="6" height="12" viewBox="0 0 6 12"><path d="M0 3 L3 0 L6 3Z M0 8 L3 11 L6 8Z" fill="#000"/></svg>
<div style="left:399.00px;top:586px;font-size:11px;line-height:20px;color:#000;white-space:pre;">0x10</div>
<div style="left:511px;top:585px;width:100px;height:20px;background:#e5e5e5;box-sizing:border-box;border:1px solid #adadad;"></div>
<div style="left:515.00px;top:586px;font-size:11px;line-height:20px;color:#000;white-space:pre;">AI (0x04)</div>
<svg style="left:598px;top:594px" width="9" height="5" viewBox="0 0 9 5"><path d="M0.5 0.5 L4.5 4.3 L8.5 0.5" fill="none" stroke="#333" stroke-width="1.1"/></svg>
<div style="left:632px;top:585px;width:180px;height:20px;background:#e5e5e5;box-sizing:border-box;border:1px solid #adadad;"></div>
<div style="left:636.00px;top:586px;font-size:11px;line-height:20px;color:#000;white-space:pre;">4 bytes, signed</div>
<svg style="left:799px;top:594px" width="9" height="5" viewBox="0 0 9 5"><path d="M0.5 0.5 L4.5 4.3 L8.5 0.5" fill="none" stroke="#333" stroke-width="1.1"/></svg>
<div style="left:833px;top:585px;width:200px;height:20px;background:#e5e5e5;box-sizing:border-box;border:1px solid #adadad;"></div>
<div style="left:837.00px;top:586px;font-size:11px;line-height:20px;color:#000;white-space:pre;">direct word and bite order</div>
<svg style="left:1020px;top:594px" width="9" height="5" viewBox="0 0 9 5"><path d="M0.5 0.5 L4.5 4.3 L8.5 0.5" fill="none" stroke="#333" stroke-width="1.1"/></svg>
<div style="left:1054px;top:585px;width:90px;height:20px;background:#fff;box-sizing:border-box;border:1px solid #7a7a7a;"></div>
<div style="left:1128px;top:587px;width:14px;height:16px;background:#e6e6e6;box-sizing:border-box;border:1px solid #b4b4b4;"></div>
<div style="left:1129px;top:595px;width:12px;height:1px;background:#b4b4b4;"></div>
<svg style="left:1132px;top:590px" width="6" height="12" viewBox="0 0 6 12"><path d="M0 3 L3 0 L6 3Z M0 8 L3 11 L6 8Z" fill="#000"/></svg>
<div style="left:1058.00px;top:586px;font-size:10.5px;line-height:20px;color:#000;white-space:pre;letter-spacing:-0.408px;">1000 mc</div>
<div style="left:1201px;top:588px;width:13px;height:13px;background:#fff;box-sizing:border-box;border:1px solid #333;"></div>
<div style="left:70.50px;top:612px;font-size:11px;line-height:20px;color:#000;white-space:pre;font-weight:bold;-webkit-text-stroke:0.2px #000;">8</div>
<div style="left:118px;top:614px;width:13px;height:13px;background:#fff;box-sizing:border-box;border:1px solid #333;"></div>
<svg style="left:118px;top:614px" width="13" height="13" viewBox="0 0 13 13"><path d="M2.2 5.9 L4.9 9.1 L10.6 3.2" fill="none" stroke="#333" stroke-width="1.35"/></svg>
<div style="left:163px;top:611px;width:95px;height:20px;background:#fff;box-sizing:border-box;border:1px solid #7a7a7a;"></div>
<div style="left:242px;top:613px;width:14px;height:16px;background:#e6e6e6;box-sizing:border-box;border:1px solid #b4b4b4;"></div>
<div style="left:243px;top:621px;width:12px;height:1px;background:#b4b4b4;"></div>
<svg style="left:246px;top:616px" width="6" height="12" viewBox="0 0 6 12"><path d="M0 3 L3 0 L6 3Z M0 8 L3 11 L6 8Z" fill="#000"/></svg>
<div style="left:167.00px;top:612px;font-size:11px;line-height:20px;color:#000;white-space:pre;">1</div>
<div style="left:279px;top:611px;width:95px;height:20px;background:#f0f0f0;box-sizing:border-box;border:1px solid #cccccc;"></div>
<div style="left:358px;top:613px;width:14px;height:16px;background:#f0f0f0;box-sizing:border-box;border:1px solid #d9d9d9;"></div>
<div style="left:359px;top:621px;width:12px;height:1px;background:#d9d9d9;"></div>
<svg style="left:362px;top:616px" width="6" height="12" viewBox="0 0 6 12"><path d="M0 3 L3 0 L6 3Z M0 8 L3 11 L6 8Z" fill="#6d6d6d"/></svg>
<div style="left:283.00px;top:612px;font-size:11px;line-height:20px;color:#6d6d6d;white-space:pre;letter-spacing:-0.318px;">40019</div>
<div style="left:395px;top:611px;width:95px;height:20px;background:#fff;box-sizing:border-box;border:1px solid #7a7a7a;"></div>
<div style="left:474px;top:613px;width:14px;height:16px;background:#e6e6e6;box-sizing:border-box;border:1px solid #b4b4b4;"></div>
<div style="left:475px;top:621px;width:12px;height:1px;background:#b4b4b4;"></div>
<svg style="left:478px;top:616px" width="6" height="12" viewBox="0 0 6 12"><path d="M0 3 L3 0 L6 3Z M0 8 L3 11 L6 8Z" fill="#000"/></svg>
<div style="left:399.00px;top:612px;font-size:11px;line-height:20px;color:#000;white-space:pre;">0x12</div>
<div style="left:511px;top:611px;width:100px;height:20px;background:#e5e5e5;box-sizing:border-box;border:1px solid #adadad;"></div>
<div style="left:515.00px;top:612px;font-size:11px;line-height:20px;color:#000;white-space:pre;">AI (0x04)</div>
<svg style="left:598px;top:620px" width="9" height="5" viewBox="0 0 9 5"><path d="M0.5 0.5 L4.5 4.3 L8.5 0.5" fill="none" stroke="#333" stroke-width="1.1"/></svg>
<div style="left:632px;top:611px;width:180px;height:20px;background:#e5e5e5;box-sizing:border-box;border:1px solid #adadad;"></div>
<div style="left:636.00px;top:612px;font-size:11px;line-height:20px;color:#000;white-space:pre;">4 bytes, signed</div>
<svg style="left:799px;top:620px" width="9" height="5" viewBox="0 0 9 5"><path d="M0.5 0.5 L4.5 4.3 L8.5 0.5" fill="none" stroke="#333" stroke-width="1.1"/></svg>
<div style="left:833px;top:611px;width:200px;height:20px;background:#e5e5e5;box-sizing:border-box;border:1px solid #adadad;"></div>
<div style="left:837.00px;top:612px;font-size:11px;line-height:20px;color:#000;white-space:pre;">direct word and bite order</div>
<svg style="left:1020px;top:620px" width="9" height="5" viewBox="0 0 9 5"><path d="M0.5 0.5 L4.5 4.3 L8.5 0.5" fill="none" stroke="#333" stroke-width="1.1"/></svg>
<div style="left:1054px;top:611px;width:90px;height:20px;background:#fff;box-sizing:border-box;border:1px solid #7a7a7a;"></div>
<div style="left:1128px;top:613px;width:14px;height:16px;background:#e6e6e6;box-sizing:border-box;border:1px solid #b4b4b4;"></div>
<div style="left:1129px;top:621px;width:12px;height:1px;background:#b4b4b4;"></div>
<svg style="left:1132px;top:616px" width="6" height="12" viewBox="0 0 6 12"><path d="M0 3 L3 0 L6 3Z M0 8 L3 11 L6 8Z" fill="#000"/></svg>
<div style="left:1058.00px;top:612px;font-size:10.5px;line-height:20px;color:#000;white-space:pre;letter-spacing:-0.408px;">1000 mc</div>
<div style="left:1201px;top:614px;width:13px;height:13px;background:#fff;box-sizing:border-box;border:1px solid #333;"></div>
<div style="left:70.50px;top:638px;font-size:11px;line-height:20px;color:#000;white-space:pre;font-weight:bold;-webkit-text-stroke:0.2px #000;">9</div>
<div style="left:118px;top:640px;width:13px;height:13px;background:#fff;box-sizing:border-box;border:1px solid #333;"></div>
<svg style="left:118px;top:640px" width="13" height="13" viewBox="0 0 13 13"><path d="M2.2 5.9 L4.9 9.1 L10.6 3.2" fill="none" stroke="#333" stroke-width="1.35"/></svg>
<div style="left:163px;top:637px;width:95px;height:20px;background:#fff;box-sizing:border-box;border:1px solid #7a7a7a;"></div>
<div style="left:242px;top:639px;width:14px;height:16px;background:#e6e6e6;box-sizing:border-box;border:1px solid #b4b4b4;"></div>
<div style="left:243px;top:647px;width:12px;height:1px;background:#b4b4b4;"></div>
<svg style="left:246px;top:642px" width="6" height="12" viewBox="0 0 6 12"><path d="M0 3 L3 0 L6 3Z M0 8 L3 11 L6 8Z" fill="#000"/></svg>
<div style="left:167.00px;top:638px;font-size:11px;line-height:20px;color:#000;white-space:pre;">1</div>
<div style="left:279px;top:637px;width:95px;height:20px;background:#f0f0f0;box-sizing:border-box;border:1px solid #cccccc;"></div>
<div style="left:358px;top:639px;width:14px;height:16px;background:#f0f0f0;box-sizing:border-box;border:1px solid #d9d9d9;"></div>
<div style="left:359px;top:647px;width:12px;height:1px;background:#d9d9d9;"></div>
<svg style="left:362px;top:642px" width="6" height="12" viewBox="0 0 6 12"><path d="M0 3 L3 0 L6 3Z M0 8 L3 11 L6 8Z" fill="#6d6d6d"/></svg>
<div style="left:283.00px;top:638px;font-size:11px;line-height:20px;color:#6d6d6d;white-space:pre;letter-spacing:-0.318px;">40021</div>
<div style="left:395px;top:637px;width:95px;height:20px;background:#fff;box-sizing:border-box;border:1px solid #7a7a7a;"></div>
<div style="left:474px;top:639px;width:14px;height:16px;background:#e6e6e6;box-sizing:border-box;border:1px solid #b4b4b4;"></div>
<div style="left:475px;top:647px;width:12px;height:1px;background:#b4b4b4;"></div>
<svg style="left:478px;top:642px" width="6" height="12" viewBox="0 0 6 12"><path d="M0 3 L3 0 L6 3Z M0 8 L3 11 L6 8Z" fill="#000"/></svg>
<div style="left:399.00px;top:638px;font-size:11px;line-height:20px;color:#000;white-space:pre;">0x14</div>
<div style="left:511px;top:637px;width:100px;height:20px;background:#e5e5e5;box-sizing:border-box;border:1px solid #adadad;"></div>
<div style="left:515.00px;top:638px;font-size:11px;line-height:20px;color:#000;white-space:pre;">AI (0x04)</div>
<svg style="left:598px;top:646px" width="9" height="5" viewBox="0 0 9 5"><path d="M0.5 0.5 L4.5 4.3 L8.5 0.5" fill="none" stroke="#333" stroke-width="1.1"/></svg>
<div style="left:632px;top:637px;width:180px;height:20px;background:#e5e5e5;box-sizing:border-box;border:1px solid #adadad;"></div>
<div style="left:636.00px;top:638px;font-size:11px;line-height:20px;color:#000;white-space:pre;">4 bytes, signed</div>
<svg style="left:799px;top:646px" width="9" height="5" viewBox="0 0 9 5"><path d="M0.5 0.5 L4.5 4.3 L8.5 0.5" fill="none" stroke="#333" stroke-width="1.1"/></svg>
<div style="left:833px;top:637px;width:200px;height:20px;background:#e5e5e5;box-sizing:border-box;border:1px solid #adadad;"></div>
<div style="left:837.00px;top:638px;font-size:11px;line-height:20px;color:#000;white-space:pre;">direct word and bite order</div>
<svg style="left:1020px;top:646px" width="9" height="5" viewBox="0 0 9 5"><path d="M0.5 0.5 L4.5 4.3 L8.5 0.5" fill="none" stroke="#333" stroke-width="1.1"/></svg>
<div style="left:1054px;top:637px;width:90px;height:20px;background:#fff;box-sizing:border-box;border:1px solid #7a7a7a;"></div>
<div style="left:1128px;top:639px;width:14px;height:16px;background:#e6e6e6;box-sizing:border-box;border:1px solid #b4b4b4;"></div>
<div style="left:1129px;top:647px;width:12px;height:1px;background:#b4b4b4;"></div>
<svg style="left:1132px;top:642px" width="6" height="12" viewBox="0 0 6 12"><path d="M0 3 L3 0 L6 3Z M0 8 L3 11 L6 8Z" fill="#000"/></svg>
<div style="left:1058.00px;top:638px;font-size:10.5px;line-height:20px;color:#000;white-space:pre;letter-spacing:-0.408px;">1000 mc</div>
<div style="left:1201px;top:640px;width:13px;height:13px;background:#fff;box-sizing:border-box;border:1px solid #333;"></div>
</div></div>
<div style="left:1271px;top:420px;width:1px;height:210px;background:#ffffff;"></div>
<div style="left:1272px;top:420px;width:16px;height:210px;background:#f0f0f0;"></div>
<div style="left:1272px;top:437px;width:15px;height:43px;background:#cdcdcd;"></div>
<svg style="left:1275px;top:426px" width="9" height="7" viewBox="0 0 9 7"><path d="M1 5.5 L4.5 2 L8 5.5" fill="none" stroke="#606060" stroke-width="1.8"/></svg>
<svg style="left:1275px;top:619px" width="9" height="7" viewBox="0 0 9 7"><path d="M1 1.5 L4.5 5 L8 1.5" fill="none" stroke="#606060" stroke-width="1.8"/></svg>
<div style="left:49px;top:652px;width:1249px;height:100px;box-sizing:border-box;border:1px solid #dcdcdc;"></div>
<div style="left:55px;top:646px;width:385px;height:12px;background:#f0f0f0;"></div>
<div style="left:57.50px;top:643px;font-size:11px;line-height:20px;color:#000;white-space:pre;letter-spacing:-0.115px;">Conditions for generation additional event &quot;MODBUS parameter have changed&quot;</div>
</div></div>
<div style="left:1336px;top:53px;width:1px;height:607px;background:#ffffff;"></div>
<div style="left:1337px;top:53px;width:16px;height:607px;background:#f0f0f0;"></div>
<div style="left:1353px;top:53px;width:1px;height:607px;background:#ffffff;"></div>
<div style="left:1337px;top:102px;width:15px;height:371px;background:#cdcdcd;"></div>
<svg style="left:1340px;top:59px" width="9" height="7" viewBox="0 0 9 7"><path d="M1 5.5 L4.5 2 L8 5.5" fill="none" stroke="#606060" stroke-width="1.8"/></svg>
<svg style="left:1340px;top:647px" width="9" height="7" viewBox="0 0 9 7"><path d="M1 1.5 L4.5 5 L8 1.5" fill="none" stroke="#606060" stroke-width="1.8"/></svg>
<div style="left:0;top:0;width:1327px;height:60px;overflow:hidden;">
<div style="left:11px;top:34px;width:109px;height:18px;box-sizing:border-box;border:1px solid #d9d9d9;border-bottom:none;background:#f0f0f0;"></div>
<div style="left:20.50px;top:34px;font-size:11px;line-height:20px;color:#000;white-space:pre;letter-spacing:-0.298px;">Data Transmission</div>
<div style="left:119px;top:34px;width:105px;height:18px;box-sizing:border-box;border:1px solid #d9d9d9;border-bottom:none;background:#f0f0f0;"></div>
<div style="left:131.30px;top:34px;font-size:11px;line-height:20px;color:#000;white-space:pre;letter-spacing:-0.114px;">Protocol settings</div>
<div style="left:223px;top:34px;width:92px;height:18px;box-sizing:border-box;border:1px solid #d9d9d9;border-bottom:none;background:#f0f0f0;"></div>
<div style="left:235.30px;top:34px;font-size:11px;line-height:20px;color:#000;white-space:pre;letter-spacing:-0.143px;">Track settings</div>
<div style="left:314px;top:34px;width:101px;height:18px;box-sizing:border-box;border:1px solid #d9d9d9;border-bottom:none;background:#f0f0f0;"></div>
<div style="left:326.40px;top:34px;font-size:11px;line-height:20px;color:#000;white-space:pre;letter-spacing:-0.167px;">System settings</div>
<div style="left:414px;top:34px;width:66px;height:18px;box-sizing:border-box;border:1px solid #d9d9d9;border-bottom:none;background:#f0f0f0;"></div>
<div style="left:426.50px;top:34px;font-size:10.5px;line-height:20px;color:#000;white-space:pre;letter-spacing:-0.262px;">CAN-bus</div>
<div style="left:580px;top:34px;width:155px;height:18px;box-sizing:border-box;border:1px solid #d9d9d9;border-bottom:none;background:#f0f0f0;"></div>
<div style="left:590.50px;top:34px;font-size:11px;line-height:20px;color:#000;white-space:pre;letter-spacing:-0.056px;">Temperature sensor 1-Wire</div>
<div style="left:734px;top:34px;width:78px;height:18px;box-sizing:border-box;border:1px solid #d9d9d9;border-bottom:none;background:#f0f0f0;"></div>
<div style="left:745.60px;top:34px;font-size:11px;line-height:20px;color:#000;white-space:pre;letter-spacing:-0.062px;">Input Lines</div>
<div style="left:811px;top:34px;width:94px;height:18px;box-sizing:border-box;border:1px solid #d9d9d9;border-bottom:none;background:#f0f0f0;"></div>
<div style="left:823.90px;top:34px;font-size:11px;line-height:20px;color:#000;white-space:pre;letter-spacing:-0.263px;">Accelerometer</div>
<div style="left:904px;top:34px;width:83px;height:18px;box-sizing:border-box;border:1px solid #d9d9d9;border-bottom:none;background:#f0f0f0;"></div>
<div style="left:916.00px;top:34px;font-size:11px;line-height:20px;color:#000;white-space:pre;letter-spacing:-0.109px;">Output lines</div>
<div style="left:986px;top:34px;width:80px;height:18px;box-sizing:border-box;border:1px solid #d9d9d9;border-bottom:none;background:#f0f0f0;"></div>
<div style="left:998.60px;top:34px;font-size:11px;line-height:20px;color:#000;white-space:pre;letter-spacing:-0.418px;">Subscribers</div>
<div style="left:1065px;top:34px;width:113px;height:18px;box-sizing:border-box;border:1px solid #d9d9d9;border-bottom:none;background:#f0f0f0;"></div>
<div style="left:1077.40px;top:34px;font-size:11px;line-height:20px;color:#000;white-space:pre;letter-spacing:-0.285px;">TouchMemory Key</div>
<div style="left:1177px;top:34px;width:93px;height:18px;box-sizing:border-box;border:1px solid #d9d9d9;border-bottom:none;background:#f0f0f0;"></div>
<div style="left:1189.50px;top:34px;font-size:11px;line-height:20px;color:#000;white-space:pre;letter-spacing:-0.207px;">Security mode</div>
<div style="left:1269px;top:34px;width:132px;height:18px;box-sizing:border-box;border:1px solid #d9d9d9;border-bottom:none;background:#f0f0f0;"></div>
<div style="left:1281.00px;top:34px;font-size:11px;line-height:20px;color:#000;white-space:pre;">EcoDriving</div>
<div style="left:479px;top:32px;width:102px;height:21px;box-sizing:border-box;border:1px solid #d9d9d9;border-bottom:none;background:#fff;"></div>
<div style="left:492.60px;top:33px;font-size:11px;line-height:20px;color:#000;white-space:pre;letter-spacing:-0.319px;">RS-232/RS-485</div>
</div>
<div style="left:1327px;top:33px;width:14px;height:19px;background:#cccccc;"></div>
<svg style="left:1330px;top:36px" width="8" height="12" viewBox="0 0 8 12"><path d="M6 1 L1 6 L6 11Z" fill="#a6a6a6"/><rect x="6" y="1" width="1" height="10" fill="#fff"/></svg>
<div style="left:1342px;top:33px;width:14px;height:19px;box-sizing:border-box;border:1px solid #adadad;background:#e5e5e5;"></div>
<svg style="left:1345px;top:36px" width="8" height="12" viewBox="0 0 8 12"><path d="M1 1 L6 6 L1 11Z" fill="#000"/></svg>
<div style="left:1356px;top:40px;width:1px;height:8px;background:#222;"></div>
<div style="left:10px;top:669px;width:1346px;height:59px;box-sizing:border-box;border:1px solid #e4e4e4;"></div>
<div style="left:11px;top:671px;width:118px;height:56px;box-sizing:border-box;background:#e1e1e1;border:1px solid #adadad;"></div>
<div style="left:57.80px;top:683px;font-size:10.5px;line-height:20px;color:#000;white-space:pre;letter-spacing:-0.207px;">Save</div>
<div style="left:63.40px;top:696px;font-size:11px;line-height:20px;color:#000;white-space:pre;letter-spacing:-0.315px;">file</div>
<div style="left:137px;top:671px;width:118px;height:56px;box-sizing:border-box;background:#e1e1e1;border:1px solid #adadad;"></div>
<div style="left:183.50px;top:683px;font-size:10.5px;line-height:20px;color:#000;white-space:pre;letter-spacing:-0.182px;">Load</div>
<div style="left:173.20px;top:696px;font-size:11px;line-height:20px;color:#000;white-space:pre;letter-spacing:-0.254px;">to Device</div>
<div style="left:584px;top:674px;width:238px;height:21px;box-sizing:border-box;background:#e1e1e1;border:1px solid #adadad;"></div>
<div style="left:642.60px;top:675px;font-size:11px;line-height:20px;color:#000;white-space:pre;letter-spacing:-0.224px;">Switch to simplified mode</div>
<div style="left:584px;top:706px;width:74px;height:21px;box-sizing:border-box;background:#e1e1e1;border:1px solid #adadad;"></div>
<div style="left:587.70px;top:707px;font-size:11px;line-height:20px;color:#000;white-space:pre;letter-spacing:0.043px;">&lt;&lt; Prev page</div>
<div style="left:666px;top:706px;width:73px;height:21px;box-sizing:border-box;background:#e1e1e1;border:1px solid #adadad;"></div>
<div style="left:677.90px;top:707px;font-size:10.5px;line-height:20px;color:#000;white-space:pre;letter-spacing:-0.196px;">Choose</div>
<svg style="left:725px;top:713px" width="9" height="6" viewBox="0 0 9 6"><path d="M0.5 0.5 L8.5 0.5 L4.5 5Z" fill="#000"/></svg>
<div style="left:747px;top:706px;width:75px;height:21px;box-sizing:border-box;background:#e1e1e1;border:1px solid #adadad;"></div>
<div style="left:749.30px;top:707px;font-size:11px;line-height:20px;color:#000;white-space:pre;letter-spacing:0.270px;">Next page &gt;&gt;</div>
<div style="left:1151px;top:671px;width:98px;height:56px;box-sizing:border-box;background:#e1e1e1;border:1px solid #adadad;"></div>
<div style="left:1186.70px;top:690px;font-size:10.5px;line-height:20px;color:#000;white-space:pre;letter-spacing:-0.408px;">Close</div>
<div style="left:1256px;top:670px;width:100px;height:58px;box-sizing:border-box;background:#87cdf9;border:1px solid #9fd6f9;border-right:1px solid #1c3348;border-bottom:1px solid #1c3348;box-shadow:inset -1px -1px #4f7088;"></div>
<div style="left:1296.60px;top:690px;font-size:10.5px;line-height:20px;color:#0a1a33;white-space:pre;letter-spacing:-0.294px;">Help</div>
</body></html>
